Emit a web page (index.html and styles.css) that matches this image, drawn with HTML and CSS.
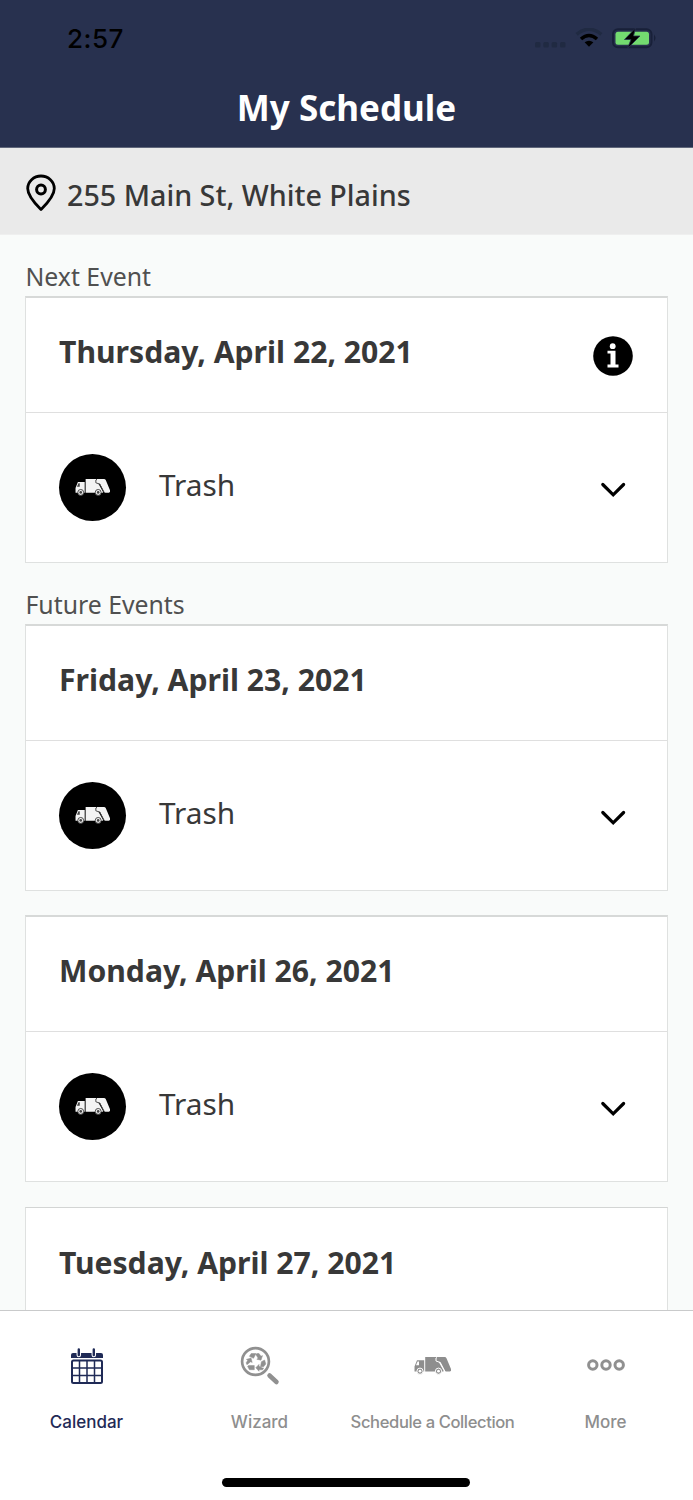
FILE: index.html
```html
<!DOCTYPE html>
<html lang="en">
<head>
<meta charset="utf-8">
<title>My Schedule</title>
<link rel="stylesheet" href="styles.css">
</head>
<body>
<svg class="defs" width="0" height="0">
  <symbol id="truck" viewBox="0 0 38 18">
    <path fill="currentColor" d="M.5 14.5V9.500L3 3.300H10.200V14.500Z M11.200 0H22L29.500 13.500V14.500H11.200Z M23 0H30.500Q32 0 32.600 1.400L37 12Q37.600 14 36 14.500H32.200Q31 14.500 30.500 13.500L26.500 5.200L23 4Z"/>
    <path class="cut-fill" d="M2 8.300L3.600 4.600H5V8.300Z"/>
    <path class="cut-line" d="M22 1V4L26.200 5.500L31 14.500" fill="none" stroke-width="1"/>
    <g class="cut-wheel" fill="currentColor" stroke-width="1">
      <circle cx="6" cy="14.200" r="3.100"/><circle cx="24.500" cy="14.200" r="3.100"/>
    </g>
    <g class="cut-fill"><circle cx="6" cy="14.200" r="1.400"/><circle cx="24.500" cy="14.200" r="1.400"/></g>
  </symbol>
  <symbol id="chevron" viewBox="0 0 26 16">
    <path d="M2.800 2.500L13.200 12.800L23.600 2.500" fill="none" stroke="#000" stroke-width="3.200" stroke-linecap="round"/>
  </symbol>
</svg>
<div class="screen">
  <header class="header">
    <div class="status">
      <span class="time">2:57</span>
      <svg class="status-icons" width="122" height="24" viewBox="0 0 122 24">
        <g fill="#202a42"><rect x="0" y="14" width="5.500" height="5.500" rx="1.500"/><rect x="8.300" y="14" width="5.500" height="5.500" rx="1.500"/><rect x="16.600" y="14" width="5.500" height="5.500" rx="1.500"/><rect x="25" y="14" width="5.500" height="5.500" rx="1.500"/></g>
        <g fill="none" stroke-width="3.500">
          <path d="M41.700 6.300Q54 -3.700 66.300 6.300" stroke="#202a42"/>
          <path d="M46 11Q54 4 62 11" stroke="#000"/>
        </g>
        <path d="M49.600 14.300Q54 11 58.400 14.300L54 18.700Z" fill="#000"/>
        <rect x="78" y="1.200" width="38.500" height="18" rx="5" fill="none" stroke="#182039" stroke-width="2"/>
        <rect x="80.500" y="3.800" width="33.500" height="13" rx="2.500" fill="#73db70"/>
        <path d="M119 6.500Q122 10 119 13.500Z" fill="#182039"/>
        <path d="M100.500 0L89.500 11.500H96L92.500 20.500L105 8H98.500Z" fill="#000" stroke="#28314f" stroke-width=".8"/>
      </svg>
    </div>
    <h1 class="title">My Schedule</h1>
  </header>
  <div class="address">
    <svg class="pin" width="30" height="38" viewBox="0 0 30 38" fill="none" stroke="#000">
      <path d="M15 35.500C10 30.500 1.700 22.500 1.700 14.500A13.300 12.500 0 0 1 28.300 14.500C28.300 22.500 20 30.500 15 35.500Z" stroke-width="2.800" stroke-linejoin="round"/>
      <circle cx="15" cy="15.500" r="4.400" stroke-width="3"/>
    </svg>
    <span class="address-text">255 Main St, White Plains</span>
  </div>
  <main class="content">
    <h2 class="label">Next Event</h2>
    <section class="card">
      <div class="card-head"><span class="date">Thursday, April 22, 2021</span>
        <svg class="info" width="40" height="40" viewBox="0 0 40 40"><circle cx="20" cy="20" r="19.800"/><circle cx="19.700" cy="10.200" r="2.900" fill="#fff"/><path d="M14.500 14.800H22.500V28.500H25.500V31.500H14.500V28.500H17.500V17.500H14.500Z" fill="#fff"/></svg>
      </div>
      <div class="card-row"><span class="disc"><svg width="36" height="17"><use href="#truck" width="36" height="17"/></svg></span><span class="kind">Trash</span><svg class="chevron" width="26" height="16"><use href="#chevron" width="26" height="16"/></svg></div>
    </section>
    <h2 class="label future">Future Events</h2>
    <section class="card">
      <div class="card-head"><span class="date">Friday, April 23, 2021</span></div>
      <div class="card-row"><span class="disc"><svg width="36" height="17"><use href="#truck" width="36" height="17"/></svg></span><span class="kind">Trash</span><svg class="chevron" width="26" height="16"><use href="#chevron" width="26" height="16"/></svg></div>
    </section>
    <section class="card stacked">
      <div class="card-head"><span class="date">Monday, April 26, 2021</span></div>
      <div class="card-row"><span class="disc"><svg width="36" height="17"><use href="#truck" width="36" height="17"/></svg></span><span class="kind">Trash</span><svg class="chevron" width="26" height="16"><use href="#chevron" width="26" height="16"/></svg></div>
    </section>
    <section class="card stacked last">
      <div class="card-head"><span class="date">Tuesday, April 27, 2021</span></div>
    </section>
  </main>
  <nav class="tabs">
    <a class="tab active">
      <span class="tab-icon nudged"><svg width="34" height="38" viewBox="0 0 34 38">
        <path d="M3 6H31Q33 6 33 8V11H1V8Q1 6 3 6Z" fill="#1f2a56"/>
        <g fill="none" stroke="#1f2a56"><rect x="2" y="13.500" width="30" height="22.500" rx="1.500" stroke-width="2"/><path d="M2 21H32M2 28.500H32M9.500 13V36M17 13V36M24.500 13V36" stroke-width="1.500"/></g>
        <path d="M8.800 2.500V8M23.800 2.500V8" stroke="#fff" stroke-width="4.500" stroke-linecap="round"/>
        <path d="M8.800 2.500V8M23.800 2.500V8" stroke="#1f2a56" stroke-width="2.400" stroke-linecap="round"/>
      </svg></span>
      <span class="tab-text">Calendar</span>
    </a>
    <a class="tab">
      <span class="tab-icon nudged"><svg width="40" height="40" viewBox="0 0 40 40">
        <circle cx="15.500" cy="15.500" r="13.400" fill="none" stroke="#909090" stroke-width="2.700"/>
        <path d="M29.500 29.500L36.500 36" stroke="#909090" stroke-width="4.500" stroke-linecap="round"/>
        <g fill="#909090" stroke="#909090" stroke-width=".5">
          <path d="M11.200 7.500H16L13.500 12.300L9.400 10.300Z M17 7.500H19L21 10.300L22.500 9.600L21 14.200L16.800 13.200L18.200 12.200L15.800 8.600Z"/>
          <path d="M21.400 15.700L24.600 14L25.800 18L23.500 20.800H20.500Z M23.600 22L22.600 23.800H19V25.300L15.800 21.700L19 18.400V20.300L22.500 22Z"/>
          <path d="M14.300 19.600V23.700H9.400L7.600 20.300L8.600 19.400Z M6.900 18.700L6.200 16.800L7.800 14.200L6.400 13.400L11 12L12.200 16.500L10.700 15.700Z"/>
        </g>
      </svg></span>
      <span class="tab-text">Wizard</span>
    </a>
    <a class="tab">
      <span class="tab-icon nudged"><svg width="38" height="18"><use href="#truck" width="38" height="18"/></svg></span>
      <span class="tab-text tight">Schedule a Collection</span>
    </a>
    <a class="tab">
      <span class="tab-icon raised"><svg width="38" height="12" viewBox="0 0 38 12" fill="none" stroke="#909090" stroke-width="3"><circle cx="5.800" cy="6" r="4.200"/><circle cx="19" cy="6" r="4.200"/><circle cx="32.200" cy="6" r="4.200"/></svg></span>
      <span class="tab-text">More</span>
    </a>
    <div class="home-bar"></div>
  </nav>
</div>
</body>
</html>
```
FILE: styles.css
```css
* { box-sizing: border-box; }
body { margin: 0; font-family: "Noto Sans", sans-serif; color: #383838; background: #f9fbfa; }
.defs { position: absolute; }
.screen { width: 693px; height: 1500px; display: flex; flex-direction: column; overflow: hidden; }
h1, h2 { margin: 0; }

.header { height: 148px; flex: none; background: #28314f; border-bottom: 1px solid #60677b; }
.status { height: 76px; padding: 2px 36px 0 67px; display: flex; align-items: center; justify-content: space-between; color: #000; }
.time { font: 500 26px/30px Inter, sans-serif; letter-spacing: .5px; }
.status-icons { margin-bottom: -1px; }
.title { text-align: center; color: #fff; font-size: 35px; line-height: 64px; font-weight: 700; }

.address { height: 87px; flex: none; background: #eaeaea; border-bottom: 1px solid #efefef; display: flex; align-items: center; padding: 3px 26px 0; gap: 11px; }
.pin { flex: none; }
.address-text { font-size: 28.7px; font-weight: 500; line-height: 40px; padding-top: 4px; }

.content { flex: 1; min-height: 0; overflow: hidden; padding: 24px 25px 0; }
.label { height: 37px; line-height: 34px; padding-left: .5px; font-size: 24.8px; font-weight: 400; color: #505050; }
.future { margin-top: 24px; }
.card { height: 267px; background: #fff; border: 1px solid #dfe1e0; border-top: 2px solid #d7d9d8; }
.stacked { margin-top: 24px; }
.last { border-top: 1px solid #d3d5d4; margin-top: 25px; }
.card-head { height: 115px; border-bottom: 1px solid #dfdfdf; display: flex; align-items: center; justify-content: space-between; padding: 0 34px 6px 33px; }
.last .card-head { padding-bottom: 4px; }
.date { font-size: 30.15px; font-weight: 700; line-height: 42px; }
.info { margin-top: 7px; }
.card-row { height: 149px; display: flex; align-items: center; padding: 0 41px 0 33px; }
.disc { width: 67px; height: 67px; border-radius: 50%; background: #000; color: #f4f4f4; display: flex; align-items: center; justify-content: center; --cut: #444; }
.kind { margin-left: 33px; font-size: 29.8px; line-height: 42px; padding-bottom: 6px; }
.chevron { margin: 4px 0 0 auto; }
.cut-fill { fill: var(--cut); }
.cut-line, .cut-wheel { stroke: var(--cut); }

.tabs { height: 190px; flex: none; background: #fff; border-top: 1px solid #c9cacb; display: grid; grid-template-columns: repeat(4, 173px); grid-template-rows: 167px 1fr; color: #8e8e8e; --cut: #fff; }
.tab { display: flex; flex-direction: column; align-items: center; padding-top: 34px; }
.tab-icon { height: 41px; display: flex; align-items: center; justify-content: center; }
.nudged { padding-left: 1px; }
.raised { padding-bottom: 2px; }
.tab-text { margin-top: 25px; font: 500 17px/22px Inter, sans-serif; white-space: nowrap; }
.tight { font-size: 16.6px; letter-spacing: -.4px; }
.active { color: #1f2a56; }
.home-bar { grid-column: 1 / -1; width: 248px; height: 9px; border-radius: 5px; background: #000; justify-self: center; }
```
